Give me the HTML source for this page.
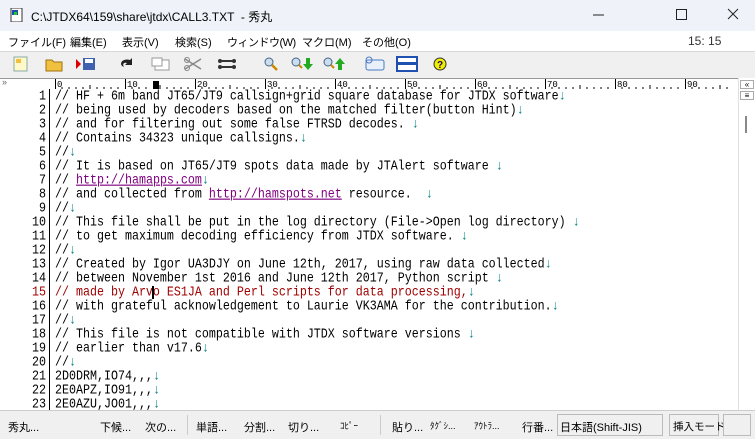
<!DOCTYPE html>
<html><head><meta charset="utf-8"><style>
*{margin:0;padding:0;box-sizing:border-box}
body{width:755px;height:439px;overflow:hidden;background:#fff;font-family:"Liberation Sans","Noto Sans CJK JP",sans-serif;position:relative}
.title{position:absolute;left:0;top:0;width:755px;height:31px;background:#eff3f9;font-size:12px;color:#000}
.menu{position:absolute;left:0;top:31px;width:755px;height:21px;background:#fff;font-size:11px;border-bottom:1px solid #d8d8d8}
.menu span{position:absolute;top:3px;white-space:nowrap}
.tb{position:absolute;left:0;top:52px;width:755px;height:26px;background:#f0f0f0}
.ico{position:absolute;top:56px;width:18px;height:16px}
.ruler{position:absolute;left:0;top:78px;width:738px;height:11px;background:#fff;border-top:1px solid #999}
.ruler .r{position:absolute;left:55px;top:0;width:683px;height:11px;border-bottom:1px solid #000;font-family:"Liberation Mono",monospace;font-size:9px}
.txt{position:absolute;left:0;top:89px;width:738px;height:321px;background:#fff;font-family:"Liberation Mono","Noto Sans CJK JP",monospace;font-size:11.67px}
.ln{position:absolute;left:0;width:46px;text-align:right;color:#000;height:14px;line-height:14px;transform:scaleY(1.15)}
.l{position:absolute;left:55px;white-space:pre;height:14px;line-height:14px;color:#000;transform:scaleY(1.15);transform-origin:0 50%}
.bar{position:absolute;left:49px;top:0;width:1px;height:321px;background:#000}
.a{color:#008080}
.u{color:#800080;text-decoration:underline}
.red{color:#a00000}
.sb{position:absolute;left:738px;top:78px;width:17px;height:332px;background:#fff;border-left:1px solid #e0e0e0}
.st{position:absolute;left:0;top:410px;width:755px;height:29px;background:#f0f0f0;font-size:11px;border-top:1px solid #ccc}
.st span{position:absolute;top:8px;white-space:nowrap}
</style></head><body>
<div class="title">
<svg style="position:absolute;left:10px;top:8px" width="14" height="14"><rect x="1" y="0" width="11" height="14" fill="#fff" stroke="#333"/><rect x="2" y="2" width="6" height="5" fill="#1a4fb0"/><rect x="4" y="4" width="3" height="3" fill="#2c2"/></svg>
<span style="position:absolute;left:31px;top:8px">C:\JTDX64\159\share\jtdx\CALL3.TXT &nbsp;- 秀丸</span>
<svg style="position:absolute;left:590px;top:8px" width="160" height="14"><line x1="3" y1="7" x2="14" y2="7" stroke="#222"/><rect x="86.5" y="1.5" width="10" height="10" fill="none" stroke="#222"/><path d="M138 1l10 10M148 1l-10 10" stroke="#222"/></svg>
</div>
<div class="menu">
<span style="left:8px">ファイル(F)</span><span style="left:70px">編集(E)</span><span style="left:122px">表示(V)</span><span style="left:175px">検索(S)</span><span style="left:227px;letter-spacing:-0.5px">ウィンドウ(W)</span><span style="left:302px">マクロ(M)</span><span style="left:362px">その他(O)</span>
<span style="left:688px;color:#333;font-size:12px">15: 15</span>
</div>
<div class="tb"></div>
<div class="ico" style="left:12px"><svg width="18" height="16"><rect x="2" y="1" width="13" height="14" fill="#fff8c8" stroke="#8aa"/><rect x="4" y="3" width="5" height="4" fill="#f0c040"/></svg></div>
<div class="ico" style="left:45px"><svg width="18" height="16"><path d="M1 4h6l2 2h8v9H1z" fill="#f0c040" stroke="#a07010"/></svg></div>
<div class="ico" style="left:74px"><svg width="24" height="16"><path d="M2 3l5 5-5 5z" fill="#d00"/><rect x="9" y="2" width="12" height="12" fill="#4060b0"/><rect x="11" y="3" width="8" height="4" fill="#fff"/></svg></div>
<div class="ico" style="left:118px"><svg width="20" height="16"><path d="M4 10c-3-4 2-8 8-6l2-2v7h-7l2-2c-3-1-5 1-3 4z" fill="#222"/></svg></div>
<div class="ico" style="left:151px"><svg width="20" height="16"><rect x="4" y="4" width="14" height="10" fill="#fff" stroke="#999"/><rect x="1" y="2" width="10" height="8" fill="#fff" stroke="#999"/></svg></div>
<div class="ico" style="left:183px"><svg width="20" height="16"><path d="M2 3l16 10M2 13l16-10" stroke="#888" stroke-width="1.5"/><circle cx="4" cy="4" r="2.5" fill="none" stroke="#888"/><circle cx="4" cy="12" r="2.5" fill="none" stroke="#888"/></svg></div>
<div class="ico" style="left:217px"><svg width="20" height="16"><rect x="3" y="4" width="14" height="2" fill="#333"/><rect x="3" y="10" width="14" height="2" fill="#333"/><circle cx="3" cy="5" r="2" fill="#333"/><circle cx="17" cy="5" r="2" fill="#333"/><circle cx="3" cy="11" r="2" fill="#333"/><circle cx="17" cy="11" r="2" fill="#333"/></svg></div>
<div class="ico" style="left:262px"><svg width="18" height="16"><circle cx="7" cy="6" r="4" fill="#cde" stroke="#468"/><path d="M10 9l5 5" stroke="#c80" stroke-width="2.5"/></svg></div>
<div class="ico" style="left:290px"><svg width="26" height="16"><circle cx="6" cy="6" r="4" fill="#cde" stroke="#468"/><path d="M9 9l3 3" stroke="#c80" stroke-width="2"/><path d="M16 2h4v6h3l-5 6-5-6h3z" fill="#2a2"/></svg></div>
<div class="ico" style="left:322px"><svg width="26" height="16"><circle cx="6" cy="6" r="4" fill="#cde" stroke="#468"/><path d="M9 9l3 3" stroke="#c80" stroke-width="2"/><path d="M16 14h4v-6h3l-5-6-5 6h3z" fill="#2a2"/></svg></div>
<div class="ico" style="left:364px"><svg width="22" height="16"><rect x="2" y="4" width="18" height="10" rx="2" fill="#e8f0fa" stroke="#4a7ac0"/><circle cx="5" cy="4" r="3" fill="none" stroke="#4a7ac0"/></svg></div>
<div class="ico" style="left:396px"><svg width="22" height="16"><rect x="1" y="1" width="20" height="14" fill="#fff" stroke="#2050b0" stroke-width="2"/><rect x="1" y="6" width="20" height="3" fill="#2050b0"/></svg></div>
<div class="ico" style="left:432px"><svg width="18" height="16"><circle cx="8" cy="8" r="6" fill="#ee0" stroke="#333"/><text x="5" y="12" font-size="10" font-weight="bold" fill="#206">?</text></svg></div>
<div class="ruler"><span style="position:absolute;left:2px;top:-2px;font-size:9px;color:#666">»</span>
<div class="r">
<svg width="683" height="11" style="position:absolute;left:0;top:0">
<g stroke="#000">
<line x1="0.5" y1="0" x2="0.5" y2="11"/><line x1="70.5" y1="0" x2="70.5" y2="11"/><line x1="140.5" y1="0" x2="140.5" y2="11"/><line x1="210.5" y1="0" x2="210.5" y2="11"/><line x1="280.5" y1="0" x2="280.5" y2="11"/><line x1="350.5" y1="0" x2="350.5" y2="11"/><line x1="420.5" y1="0" x2="420.5" y2="11"/><line x1="490.5" y1="0" x2="490.5" y2="11"/><line x1="560.5" y1="0" x2="560.5" y2="11"/><line x1="630.5" y1="0" x2="630.5" y2="11"/>
</g>
<rect x="98" y="2" width="6" height="9" fill="#000"/>
<g font-size="9" font-family="Liberation Mono">
<text x="2" y="8">0</text><text x="72" y="8">10</text><text x="142" y="8">20</text><text x="212" y="8">30</text><text x="282" y="8">40</text><text x="352" y="8">50</text><text x="422" y="8">60</text><text x="492" y="8">70</text><text x="562" y="8">80</text><text x="632" y="8">90</text>
</g>
<path d="M7 8v3M14 8v3M21 8v3M28 8v3M35 6v5M42 8v3M49 8v3M56 8v3M63 8v3M77 8v3M84 8v3M91 8v3M105 6v5M112 8v3M119 8v3M126 8v3M133 8v3M147 8v3M154 8v3M161 8v3M168 8v3M175 6v5M182 8v3M189 8v3M196 8v3M203 8v3M217 8v3M224 8v3M231 8v3M238 8v3M245 6v5M252 8v3M259 8v3M266 8v3M273 8v3M287 8v3M294 8v3M301 8v3M308 8v3M315 6v5M322 8v3M329 8v3M336 8v3M343 8v3M357 8v3M364 8v3M371 8v3M378 8v3M385 6v5M392 8v3M399 8v3M406 8v3M413 8v3M427 8v3M434 8v3M441 8v3M448 8v3M455 6v5M462 8v3M469 8v3M476 8v3M483 8v3M497 8v3M504 8v3M511 8v3M518 8v3M525 6v5M532 8v3M539 8v3M546 8v3M553 8v3M567 8v3M574 8v3M581 8v3M588 8v3M595 6v5M602 8v3M609 8v3M616 8v3M623 8v3M637 8v3M644 8v3M651 8v3M658 8v3M665 6v5M672 8v3" stroke="#000"/>
</svg></div></div>
<div class="txt">
<div class="bar"></div>
<div class="ln" style="top:0">1</div><div class="l" style="top:0">// HF + 6m band JT65/JT9 callsign+grid square database for JTDX software<span class="a">↓</span></div>
<div class="ln" style="top:14px">2</div><div class="l" style="top:14px">// being used by decoders based on the matched filter(button Hint)<span class="a">↓</span></div>
<div class="ln" style="top:28px">3</div><div class="l" style="top:28px">// and for filtering out some false FTRSD decodes. <span class="a">↓</span></div>
<div class="ln" style="top:42px">4</div><div class="l" style="top:42px">// Contains 34323 unique callsigns.<span class="a">↓</span></div>
<div class="ln" style="top:56px">5</div><div class="l" style="top:56px">//<span class="a">↓</span></div>
<div class="ln" style="top:70px">6</div><div class="l" style="top:70px">// It is based on JT65/JT9 spots data made by JTAlert software <span class="a">↓</span></div>
<div class="ln" style="top:84px">7</div><div class="l" style="top:84px">// <span class="u">http://hamapps.com</span><span class="a">↓</span></div>
<div class="ln" style="top:98px">8</div><div class="l" style="top:98px">// and collected from <span class="u">http://hamspots.net</span> resource.  <span class="a">↓</span></div>
<div class="ln" style="top:112px">9</div><div class="l" style="top:112px">//<span class="a">↓</span></div>
<div class="ln" style="top:126px">10</div><div class="l" style="top:126px">// This file shall be put in the log directory (File-&gt;Open log directory) <span class="a">↓</span></div>
<div class="ln" style="top:140px">11</div><div class="l" style="top:140px">// to get maximum decoding efficiency from JTDX software. <span class="a">↓</span></div>
<div class="ln" style="top:154px">12</div><div class="l" style="top:154px">//<span class="a">↓</span></div>
<div class="ln" style="top:168px">13</div><div class="l" style="top:168px">// Created by Igor UA3DJY on June 12th, 2017, using raw data collected<span class="a">↓</span></div>
<div class="ln" style="top:182px">14</div><div class="l" style="top:182px">// between November 1st 2016 and June 12th 2017, Python script <span class="a">↓</span></div>
<div class="ln red" style="top:196px">15</div><div class="l red" style="top:196px">// made by Arvo ES1JA and Perl scripts for data processing,<span class="a">↓</span></div>
<div style="position:absolute;left:152px;top:197px;width:2px;height:13px;background:#000"></div>
<div class="ln" style="top:210px">16</div><div class="l" style="top:210px">// with grateful acknowledgement to Laurie VK3AMA for the contribution.<span class="a">↓</span></div>
<div class="ln" style="top:224px">17</div><div class="l" style="top:224px">//<span class="a">↓</span></div>
<div class="ln" style="top:238px">18</div><div class="l" style="top:238px">// This file is not compatible with JTDX software versions <span class="a">↓</span></div>
<div class="ln" style="top:252px">19</div><div class="l" style="top:252px">// earlier than v17.6<span class="a">↓</span></div>
<div class="ln" style="top:266px">20</div><div class="l" style="top:266px">//<span class="a">↓</span></div>
<div class="ln" style="top:280px">21</div><div class="l" style="top:280px">2D0DRM,IO74,,,<span class="a">↓</span></div>
<div class="ln" style="top:294px">22</div><div class="l" style="top:294px">2E0APZ,IO91,,,<span class="a">↓</span></div>
<div class="ln" style="top:308px">23</div><div class="l" style="top:308px">2E0AZU,JO01,,,<span class="a">↓</span></div>
</div>
<div class="sb">
<div style="position:absolute;left:1px;top:2px;width:14px;height:9px;border:1px solid #aaa;font-size:8px;line-height:7px;text-align:center">«</div>
<div style="position:absolute;left:1px;top:13px;width:14px;height:9px;border:1px solid #aaa;font-size:8px;line-height:7px;text-align:center">≡</div>
<div style="position:absolute;left:6px;top:38px;width:2px;height:17px;background:#888"></div>
</div>
<div class="st">
<span style="left:8px">秀丸...</span><span style="left:100px">下候...</span><span style="left:145px">次の...</span>
<span style="left:187px;top:4px;width:1px;height:20px;background:#ccc"></span>
<span style="left:196px">単語...</span><span style="left:244px">分割...</span><span style="left:288px">切り...</span><span style="left:340px;font-size:9px">ｺﾋﾟｰ</span>
<span style="left:380px;top:4px;width:1px;height:20px;background:#ccc"></span>
<span style="left:392px">貼り...</span><span style="left:430px;font-size:9px">ﾀｸﾞｼ...</span><span style="left:474px;font-size:9px">ｱｳﾄﾗ...</span><span style="left:522px">行番...</span>
<span style="left:557px;top:3px;width:106px;height:22px;border:1px solid #bbb"></span><span style="left:560px">日本語(Shift-JIS)</span>
<span style="left:669px;top:3px;width:50px;height:22px;border:1px solid #bbb"></span><span style="left:673px;font-size:10.5px">挿入モード</span>
<span style="left:723px;top:3px;width:28px;height:22px;border:1px solid #bbb"></span>
</div>
</body></html>
